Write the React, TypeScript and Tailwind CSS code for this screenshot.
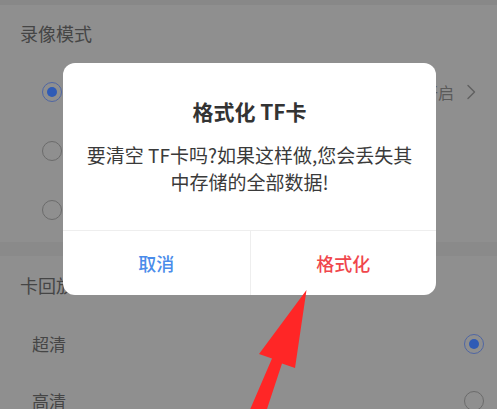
import React from "react";

function Radio({ checked }: { checked?: boolean }) {
  return checked ? (
    <span className="flex h-[20px] w-[20px] items-center justify-center rounded-full border border-[#4f66a3]">
      <span className="h-[10px] w-[10px] rounded-full bg-[#2f5bb6]" />
    </span>
  ) : (
    <span className="block h-[20px] w-[20px] rounded-full border border-[#6b6b6b]" />
  );
}

function Chevron() {
  return (
    <svg width="10" height="16" viewBox="0 0 10 16" fill="none">
      <path d="M2 1.5 L8.5 8 L2 14.5" stroke="#606060" strokeWidth="1.4" strokeLinecap="round" strokeLinejoin="round" />
    </svg>
  );
}

export default function App() {
  return (
    <div className="relative h-[409px] w-[497px] overflow-hidden bg-[#8f8f8f] font-['Noto_Sans_CJK_SC',sans-serif] text-[#454545]">
      {/* settings list behind the dim layer */}
      <div className="h-[5px] bg-[#888888]" />
      <div className="flex h-[57px] items-center pl-[20px] text-[18px]">录像模式</div>
      <div className="flex flex-col pb-[3px]">
        <div className="flex h-[59px] items-center justify-between pl-[42px] pr-[21px]">
          <div className="flex items-center gap-[14px]">
            <Radio checked />
            <span className="text-[17px]">全时录像</span>
          </div>
          <div className="flex items-center gap-[12px] text-[16px] text-[#5a5a5a]">
            <span>已开启</span>
            <Chevron />
          </div>
        </div>
        <div className="flex h-[59px] items-center pl-[42px]">
          <Radio />
        </div>
        <div className="flex h-[59px] items-center pl-[42px]">
          <Radio />
        </div>
      </div>
      <div className="h-[14px] bg-[#8a8a8a]" />
      <div className="flex h-[59px] items-center pl-[20px] text-[18px]">卡回放清晰度</div>
      <div className="flex h-[58px] items-center justify-between pl-[32px] pr-[13px] text-[17px]">
        <span>超清</span>
        <Radio checked />
      </div>
      <div className="flex h-[56px] items-center justify-between pl-[32px] pr-[13px] text-[17px]">
        <span>高清</span>
        <Radio />
      </div>

      {/* confirm dialog */}
      <div className="absolute left-[63px] top-[63px] flex w-[373px] flex-col rounded-[12px] bg-white">
        <div className="pt-[34px] text-center text-[21px] font-bold leading-[28px] text-[#333333]">格式化 TF卡</div>
        <div className="px-[18px] pb-[35px] pt-[16px] text-center text-[19px] leading-[27px] text-[#3a3a3a]">
          <div>要清空 TF卡吗?如果这样做,您会丢失其</div>
          <div>中存储的全部数据!</div>
        </div>
        <div className="grid h-[65px] grid-cols-2 border-t border-[#eeeeee]">
          <button className="flex items-center justify-center text-[18px] font-medium text-[#4a8cea]">取消</button>
          <button className="flex items-center justify-center border-l border-[#eeeeee] text-[18px] font-medium text-[#f0464c]">格式化</button>
        </div>
      </div>

      {/* red pointer arrow */}
      <svg className="absolute left-0 top-0" width="497" height="409" viewBox="0 0 497 409">
        <polygon
          points="306.5,290 295,368 282,363.5 266,412 249,412 272,358.5 259,354"
          fill="#ff2626"
        />
      </svg>
    </div>
  );
}
